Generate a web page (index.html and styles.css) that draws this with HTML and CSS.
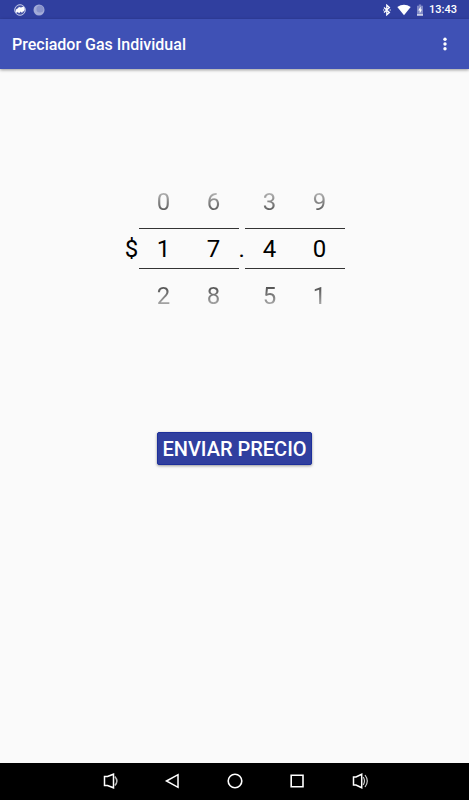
FILE: index.html
```html
<!DOCTYPE html>
<html lang="es">
<head>
    <meta charset="UTF-8">
    <meta name="viewport" content="width=device-width, initial-scale=1.0">
    <title>Preciador Gas Individual</title>
    <link rel="stylesheet" href="styles.css">
</head>
<body>
    <!-- Status bar -->
    <div class="status-bar">
        <div class="status-group">
            <svg width="12" height="12" viewBox="0 0 12 12">
                <circle cx="6" cy="6" r="5.3" fill="#4553a8" stroke="#d4d8ef" stroke-width="0.9"/>
                <path d="M1.5 7.8L2 5.4L3.6 4.4L5 3L7 3.4L9.5 2.6L10.8 5L10 7.6L8.9 7.2L8.6 8.6L7.4 8.4L6.6 7.4L5.4 9L4.4 8.8L3.8 7.8L2.8 9Z" fill="#fff"/>
            </svg>
            <svg width="12" height="12" viewBox="0 0 12 12">
                <circle cx="6" cy="6" r="5.5" fill="#a3abd8"/>
                <circle cx="7" cy="5" r="3.6" fill="#8791ca"/>
            </svg>
        </div>
        <div class="status-group status-right">
            <svg width="10" height="12" viewBox="0 0 10 12">
                <path d="M2 3.4L7.4 8.4L4.8 10.8V1.2L7.4 3.6L2 8.6" fill="none" stroke="#fff" stroke-width="1.3"/>
                <path d="M1 5.4h1.2v1.2H1zM7.6 5.4h1.2v1.2H7.6z" fill="#fff"/>
            </svg>
            <svg width="14" height="12" viewBox="0 0 14 12">
                <path d="M7 11.2L0.3 3Q7-1.6 13.7 3Z" fill="#fff"/>
            </svg>
            <svg width="8" height="12" viewBox="0 0 8 12">
                <path d="M2.8 0.5h2.4v1.2H7v9.8H1V1.7h1.8z" fill="#7f89c6"/>
                <path d="M4.7 2.6L2.2 6.6h1.5v3L6 5.4H4.7z" fill="#fff"/>
                <path d="M1 10.4h6v1.1H1z" fill="#fff"/>
            </svg>
            <span class="clock">13:43</span>
        </div>
    </div>

    <!-- App bar -->
    <header class="app-bar">
        <h1>Preciador Gas Individual</h1>
        <button class="menu-btn" type="button" aria-label="Más opciones">
            <svg width="4" height="14" viewBox="0 0 4 14" fill="#fff">
                <circle cx="2" cy="2.3" r="1.7"/>
                <circle cx="2" cy="7" r="1.7"/>
                <circle cx="2" cy="11.7" r="1.7"/>
            </svg>
        </button>
    </header>

    <!-- Price picker -->
    <main class="content">
        <div class="price">
            <span class="sign">$</span>
            <div class="picker-group">
                <div class="picker">
                    <button class="prev" type="button">0</button>
                    <input type="text" inputmode="numeric" value="1" aria-label="Decenas">
                    <button class="next" type="button">2</button>
                </div>
                <div class="picker">
                    <button class="prev" type="button">6</button>
                    <input type="text" inputmode="numeric" value="7" aria-label="Unidades">
                    <button class="next" type="button">8</button>
                </div>
            </div>
            <span class="point">.</span>
            <div class="picker-group">
                <div class="picker">
                    <button class="prev" type="button">3</button>
                    <input type="text" inputmode="numeric" value="4" aria-label="Décimas">
                    <button class="next" type="button">5</button>
                </div>
                <div class="picker">
                    <button class="prev" type="button">9</button>
                    <input type="text" inputmode="numeric" value="0" aria-label="Centésimas">
                    <button class="next" type="button">1</button>
                </div>
            </div>
        </div>
        <button class="send-btn" type="button">ENVIAR PRECIO</button>
    </main>

    <!-- System navigation -->
    <nav class="nav-bar">
        <button type="button" aria-label="Bajar volumen">
            <svg width="18" height="18" viewBox="0 0 18 18" fill="none" stroke="#fff" stroke-width="1.5">
                <path d="M2.5 4.5H5.5L11.5 2.2V15.8L5.5 13.5H2.5Z"/>
                <path d="M12.8 4.4Q17 9 12.8 13.6" stroke="#bbb"/>
            </svg>
        </button>
        <button type="button" aria-label="Atrás">
            <svg width="18" height="18" viewBox="0 0 18 18" fill="none" stroke="#fff" stroke-width="1.5">
                <path d="M2.5 9L14 2.7V15.3Z"/>
            </svg>
        </button>
        <button type="button" aria-label="Inicio">
            <svg width="18" height="18" viewBox="0 0 18 18" fill="none" stroke="#fff" stroke-width="1.6">
                <circle cx="9" cy="9" r="6.8"/>
            </svg>
        </button>
        <button type="button" aria-label="Recientes">
            <svg width="18" height="18" viewBox="0 0 18 18" fill="none" stroke="#fff" stroke-width="1.6">
                <path d="M3.2 3.2H15V14.8H3.2Z"/>
            </svg>
        </button>
        <button type="button" aria-label="Subir volumen">
            <svg width="18" height="18" viewBox="0 0 18 18" fill="none" stroke="#fff" stroke-width="1.5">
                <path d="M3.5 5H6L11.7 2.3V15.7L6 13H3.5Z"/>
                <path d="M13.2 5Q15.8 9 13.2 13M15 3Q19.6 9 15 15" stroke="#ccc" stroke-width="1.2"/>
            </svg>
        </button>
    </nav>
</body>
</html>
```
FILE: styles.css
```css
* {
    margin: 0;
    padding: 0;
    box-sizing: border-box;
}

body {
    display: flex;
    flex-direction: column;
    min-height: 100vh;
    font-family: Roboto, "Liberation Sans", sans-serif;
    background: #fafafa;
    color: #000;
}

button {
    border: none;
    background: none;
    font-family: inherit;
    cursor: pointer;
}

svg {
    display: block;
}

/* Status bar */
.status-bar {
    display: flex;
    justify-content: space-between;
    align-items: center;
    height: 19px;
    padding: 0 12px 0 14px;
    background: #303f9f;
    color: #fff;
}

.status-group {
    display: flex;
    align-items: center;
    gap: 7px;
}

.status-right {
    gap: 5px;
}

.clock {
    font-size: 11px;
    font-weight: 500;
}

/* App bar */
.app-bar {
    display: flex;
    justify-content: space-between;
    align-items: center;
    height: 50px;
    padding: 0 12px;
    background: #3f51b5;
    color: #fff;
    box-shadow: 0 1px 3px rgba(0, 0, 0, 0.4);
}

.app-bar h1 {
    font-size: 16px;
    font-weight: 500;
}

.menu-btn {
    display: flex;
    justify-content: center;
    align-items: center;
    width: 24px;
    height: 40px;
}

/* Price picker */
.content {
    flex: 1;
    display: flex;
    flex-direction: column;
    align-items: center;
    padding-top: 106px;
}

.price {
    display: flex;
    align-items: center;
    font-size: 24px;
}

.picker-group {
    display: flex;
}

.picker {
    display: flex;
    flex-direction: column;
    width: 50px;
}

.picker button,
.picker input {
    width: 100%;
    font-family: inherit;
    font-size: 24px;
    text-align: center;
}

.picker button {
    height: 53px;
    color: transparent;
    background-clip: text;
}

.picker .prev {
    background-image: linear-gradient(#bbb 30%, #555 70%);
}

.picker .next {
    background-image: linear-gradient(#555 35%, #bbb 75%);
}

.picker input {
    height: 41px;
    border: solid #333;
    border-width: 1px 0;
    background: none;
    color: #000;
}

.sign {
    width: 14px;
    text-align: center;
}

.point {
    width: 6px;
    text-align: center;
}

.send-btn {
    margin-top: 110px;
    padding: 0 4px;
    height: 33px;
    border: 1px solid #1d2f9a;
    border-radius: 2px;
    background: #303f9f;
    color: #fff;
    font-size: 20px;
    font-weight: 500;
    box-shadow: 0 1px 3px rgba(0, 0, 0, 0.4);
}

/* System navigation */
.nav-bar {
    display: flex;
    justify-content: center;
    align-items: center;
    gap: 44px;
    height: 37px;
    padding-bottom: 1px;
    background: #000;
}
```
